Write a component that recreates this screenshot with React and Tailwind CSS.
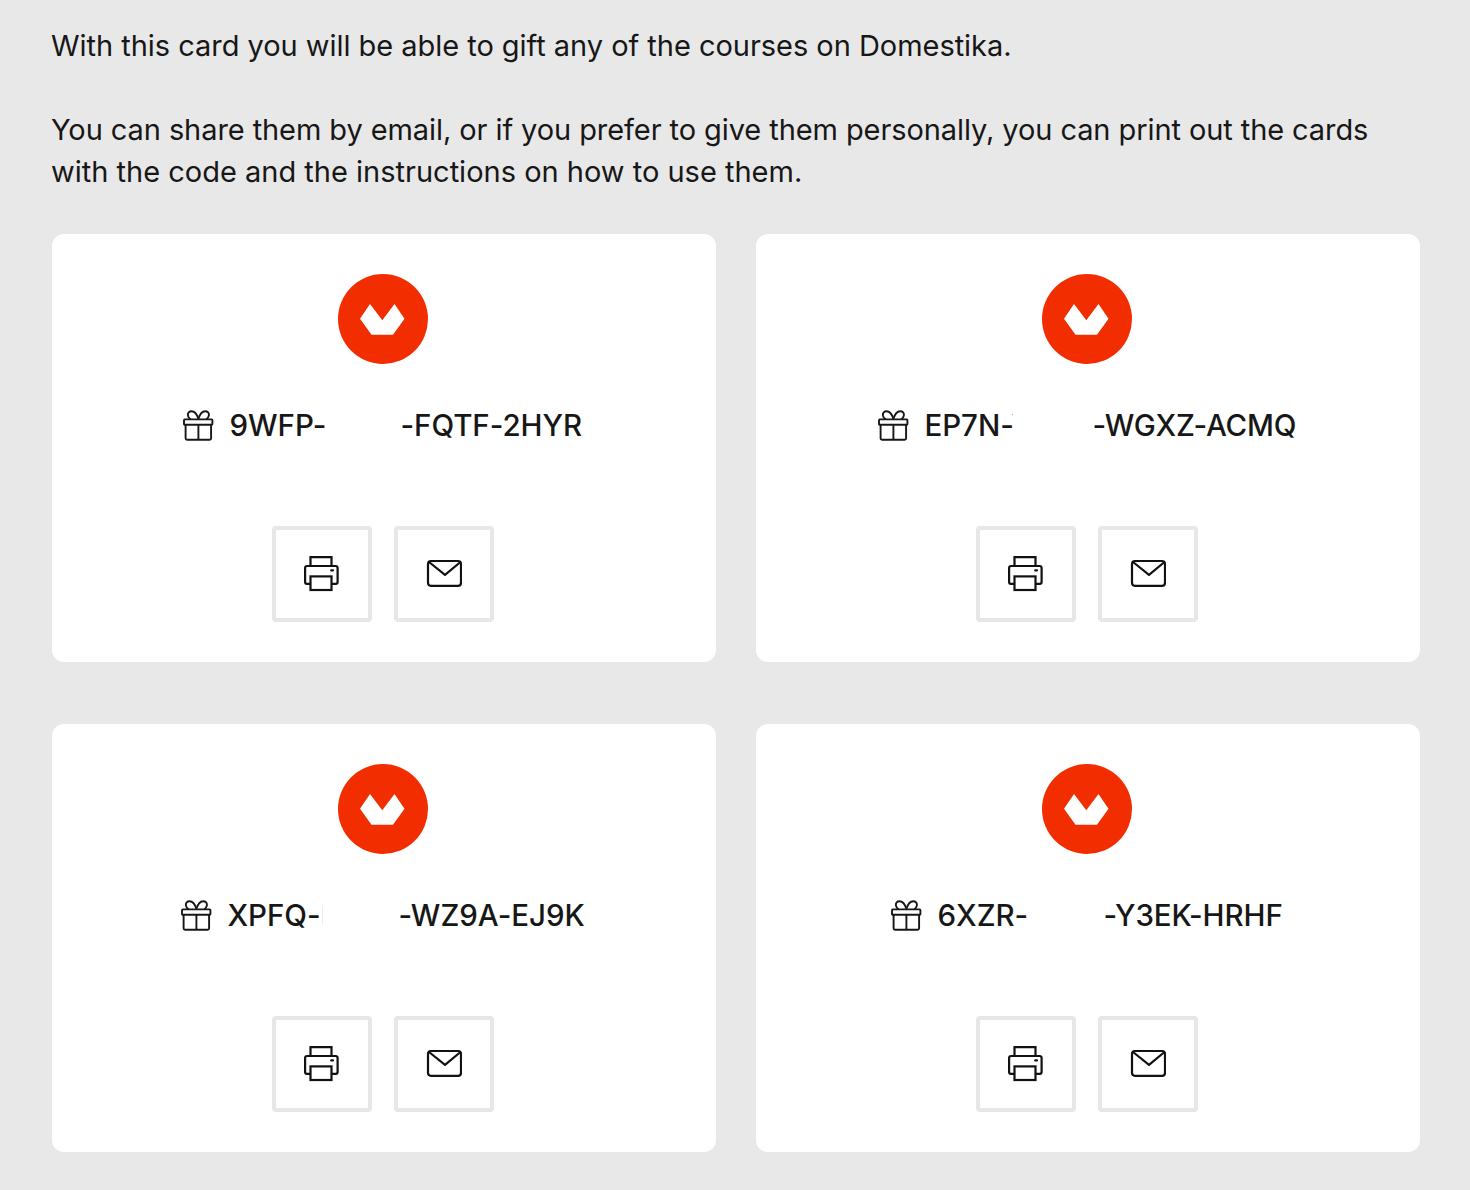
const cards = [
  { id: 1, start: '9WFP-', end: '-FQTF-2HYR', startWidth: 'w-[171px]', endWidth: 'w-[182px]' },
  { id: 2, start: 'EP7N-', end: '-WGXZ-ACMQ', startWidth: 'w-[168px]', endWidth: 'w-[203px] tracking-[-0.2px]', mark: 'dot' },
  { id: 3, start: 'XPFQ-', end: '-WZ9A-EJ9K', startWidth: 'w-[171px]', endWidth: 'w-[186px]', mark: 'line' },
  { id: 4, start: '6XZR-', end: '-Y3EK-HRHF', startWidth: 'w-[166px]', endWidth: 'w-[179px]' },
];

const Logo = () => (
  <svg className="h-[90px] w-[90px]" viewBox="0 0 90 90">
    <circle cx="45" cy="45" r="45" fill="#f22d00" />
    <path d="M32 30 L44.3 46.3 L56.5 30 L66.5 44.7 L55 60.7 H33.5 L22 44.7 Z" fill="#fff" />
  </svg>
);

const GiftIcon = () => (
  <svg className="h-8 w-8 shrink-0" viewBox="0 0 32 32" fill="none" stroke="#171717" strokeWidth="1.9" strokeLinejoin="round">
    <rect x="2" y="10.4" width="28.4" height="5.4" rx="0.8" />
    <path d="M3.6 15.8 V29.2 Q3.6 30.7 5.1 30.7 H27.6 Q29.1 30.7 29.1 29.2 V15.8" />
    <path d="M16.4 15.8 V30.6" />
    <path d="M16.4 9.8 C15.2 6 12.6 2.2 9.6 2.2 C7.2 2.2 5.5 4 5.9 6.3 C6.2 8.2 7.2 9.4 8.6 10.3" />
    <path d="M16.4 9.8 C17.6 6 20.2 2.2 23.2 2.2 C25.6 2.2 27.3 4 26.9 6.3 C26.6 8.2 25.6 9.4 24.2 10.3" />
  </svg>
);

const PrintIcon = () => (
  <svg className="h-9 w-9" viewBox="0 0 36 36" fill="none" stroke="#111" strokeWidth="2.2">
    <path d="M6.5 10 V1.2 H27.5 V10" />
    <path d="M6.5 27.8 H2.9 Q1.1 27.8 1.1 26 V12 Q1.1 10 3.1 10 H31.6 Q33.6 10 33.6 12 V26 Q33.6 27.8 31.8 27.8 H27.5" />
    <rect x="6.5" y="20.4" width="21" height="13.6" />
    <path d="M27.2 14.4 H29" strokeLinecap="round" />
  </svg>
);

const MailIcon = () => (
  <svg className="h-9 w-9" viewBox="0 0 36 36" fill="none" stroke="#111" strokeWidth="2.2">
    <rect x="2" y="5" width="33" height="24.8" rx="3" />
    <path d="M3 6 L19 18.8 L34.5 6" strokeLinejoin="round" />
  </svg>
);

const ActionButton = ({ label, children }) => (
  <button
    type="button"
    aria-label={label}
    className="flex h-24 w-[100px] items-center justify-center rounded border-4 border-[#e7e7e7] bg-white"
  >
    {children}
  </button>
);

const GiftCard = ({ card }) => (
  <div className="flex h-[428px] flex-col items-center rounded-xl bg-white pt-10 pr-0.5">
    <Logo />

    <div className="mt-10 mr-0.5 flex h-[42px] items-center text-[29.5px] font-medium tracking-[-0.05px] whitespace-nowrap">
      <GiftIcon />
      <span className={`relative ml-4 ${card.startWidth}`}>
        {card.start}
        {card.mark === 'line' && <i className="absolute top-3 left-[94px] h-5 w-px bg-[#ececec]" />}
        {card.mark === 'dot' && <i className="absolute top-[11px] left-[87px] h-px w-px bg-[#aaa]" />}
      </span>
      <span className={card.endWidth}>{card.end}</span>
    </div>

    <div className="mt-20 flex gap-[22px]">
      <ActionButton label="Print">
        <PrintIcon />
      </ActionButton>
      <ActionButton label="Send by email">
        <MailIcon />
      </ActionButton>
    </div>
  </div>
);

const App = () => {
  return (
    <main className="h-[1190px] bg-[#e8e8e8] pt-[25px] pr-[50px] pl-[52px] font-['Inter',sans-serif] text-[#171717]">
      <div className="-ml-px text-[29px] leading-[42px] whitespace-nowrap">
        <p className="tracking-[-0.035px]">With this card you will be able to gift any of the courses on Domestika.</p>
        <p className="mt-[42px] tracking-[-0.085px]">
          You can share them by email, or if you prefer to give them personally, you can print out the cards
        </p>
        <p>with the code and the instructions on how to use them.</p>
      </div>

      <div className="mt-[41px] grid grid-cols-2 gap-x-10 gap-y-[62px]">
        {cards.map((card) => (
          <GiftCard key={card.id} card={card} />
        ))}
      </div>
    </main>
  );
};

export default App;
